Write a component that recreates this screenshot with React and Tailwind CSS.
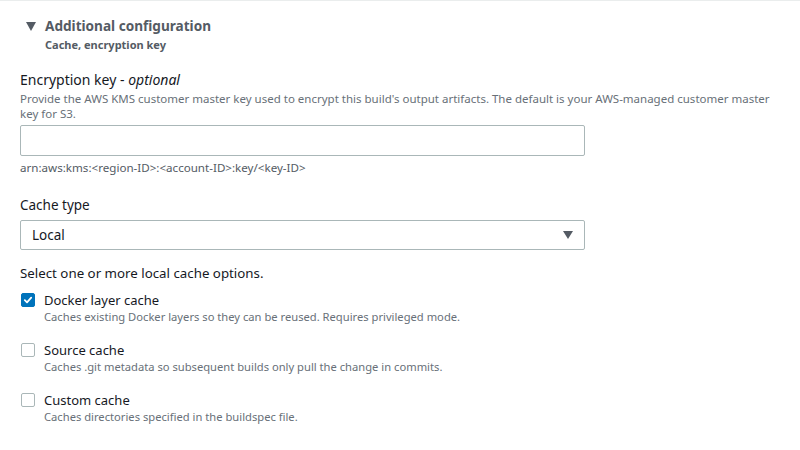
export default function App() {
  const font = { fontFamily: '"Noto Sans", "Open Sans", sans-serif' };
  const Check = ({ checked, label, desc }) => (
    <div className="flex items-start">
      <div className="w-[14px] h-[14px] mt-[1px] ml-[1px] mr-[9px] shrink-0 rounded-[2px] flex items-center justify-center border border-[#aab7b8] bg-white"
        style={checked ? { background: '#0073bb', borderColor: '#0073bb' } : undefined}>
        {checked && (
          <svg width="10" height="10" viewBox="0 0 10 10"><path d="M1.8 5.2 L4 7.3 L8.2 2.6" stroke="white" strokeWidth="1.8" fill="none" strokeLinecap="round" strokeLinejoin="round" /></svg>
        )}
      </div>
      <div>
        <div className="text-[13px] leading-[16px] text-[#16191f]">{label}</div>
        <div className="text-[11.2px] leading-[16px] text-[#687078] mt-[1px]">{desc}</div>
      </div>
    </div>
  );
  return (
    <div className="w-[800px] h-[450px] bg-white border-t border-[#eaeded] overflow-hidden" style={font}>
      <div className="pl-[26px] pt-[16px] flex items-start">
        <svg width="10" height="9" viewBox="0 0 10 9" className="mt-[5px] mr-[9px]"><path d="M0 0 L10 0 L5 9 Z" fill="#545b64" /></svg>
        <div>
          <div className="text-[13.6px] leading-[18px] font-bold text-[#545b64]">Additional configuration</div>
          <div className="text-[11px] leading-[16px] font-bold text-[#545b64] mt-[2px]">Cache, encryption key</div>
        </div>
      </div>
      <div className="pl-[20px] pr-[20px] mt-[18px]">
        <div className="text-[14px] leading-[18px] text-[#16191f]">Encryption key - <i>optional</i></div>
        <div className="text-[11.5px] leading-[15px] text-[#687078] mt-[2px] w-[760px]">Provide the AWS KMS customer master key used to encrypt this build's output artifacts. The default is your AWS-managed customer master key for S3.</div>
        <div className="w-[565px] h-[31px] border border-[#aab7b8] rounded-[2px] mt-[4px]"></div>
        <div className="text-[11.6px] leading-[16px] text-[#545b64] mt-[4px]">arn:aws:kms:&lt;region-ID&gt;:&lt;account-ID&gt;:key/&lt;key-ID&gt;</div>
        <div className="text-[13.5px] leading-[18px] text-[#16191f] mt-[20px]">Cache type</div>
        <div className="w-[565px] h-[30px] border border-[#aab7b8] rounded-[2px] mt-[6px] flex items-center justify-between pl-[11px] pr-[11px]">
          <span className="text-[13.5px] text-[#16191f]">Local</span>
          <svg width="10" height="8" viewBox="0 0 10 8"><path d="M0 0 L10 0 L5 8 Z" fill="#545b64" /></svg>
        </div>
        <div className="text-[13.3px] leading-[18px] text-[#16191f] mt-[14px]">Select one or more local cache options.</div>
        <div className="mt-[10px] flex flex-col gap-[17px]">
          <Check checked label="Docker layer cache" desc="Caches existing Docker layers so they can be reused. Requires privileged mode." />
          <Check label="Source cache" desc="Caches .git metadata so subsequent builds only pull the change in commits." />
          <Check label="Custom cache" desc="Caches directories specified in the buildspec file." />
        </div>
      </div>
    </div>
  );
}
